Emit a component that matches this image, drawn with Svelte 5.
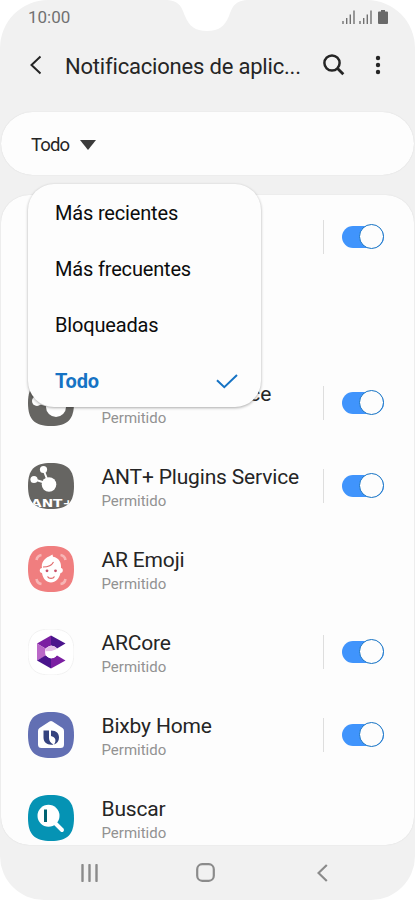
<script lang="ts">
	type App = {
		icon: string;
		name: string;
		toggle: boolean;
	};

	const options = ['Más recientes', 'Más frecuentes', 'Bloqueadas', 'Todo'];
	let selected = $state('Todo');
	let open = $state(true);

	// the first two rows sit under the open menu
	const apps: App[] = [
		{ icon: '', name: '', toggle: true },
		{ icon: '', name: '', toggle: false },
		{ icon: 'antradio', name: 'ANT Radio Service', toggle: true },
		{ icon: 'ant', name: 'ANT+ Plugins Service', toggle: true },
		{ icon: 'emoji', name: 'AR Emoji', toggle: false },
		{ icon: 'arcore', name: 'ARCore', toggle: true },
		{ icon: 'bixby', name: 'Bixby Home', toggle: true },
		{ icon: 'search', name: 'Buscar', toggle: false }
	];

	const fills: Record<string, string> = {
		antradio: '#666562',
		ant: '#666562',
		emoji: '#f07e7f',
		arcore: '#ffffff',
		bixby: '#626fb3',
		search: '#0593b4'
	};

	const squircle = 'M23 0C39.500 0 46 6.500 46 23S39.500 46 23 46 0 39.500 0 23 6.500 0 23 0Z';

	function choose(option: string) {
		selected = option;
		open = false;
	}
</script>

{#snippet signal()}
	<svg width="13" height="14" viewBox="0 0 13 14">
		<path d="M1 11v3M4.700 8v6M8.300 4.500V14M12 .5V14" stroke="#717171" stroke-width="1.400" />
	</svg>
{/snippet}

<div class="phone">
	<svg class="notch" width="80" height="32" viewBox="0 0 80 32">
		<path d="M0 0C14 1 15 9 18 16C22 26 28 31 40 31S58 26 62 16C65 9 66 1 80 0Z" fill="#fff" />
	</svg>

	<div class="status">
		<span class="time">10:00</span>
		{@render signal()}
		{@render signal()}
		<svg class="battery" width="10" height="14" viewBox="0 0 10 14">
			<path d="M3 0h4v1.500h2a1 1 0 0 1 1 1V13a1 1 0 0 1-1 1H1a1 1 0 0 1-1-1V2.500a1 1 0 0 1 1-1h2z" fill="#696969" />
		</svg>
	</div>

	<header>
		<svg class="back" width="12" height="20" viewBox="0 0 12 20">
			<path d="M10.500 1.500L1.500 10l9 8.500" fill="none" stroke="#252525" stroke-width="2" />
		</svg>
		<h1>Notificaciones de aplic...</h1>
		<svg class="find" width="22" height="22" viewBox="0 0 22 22">
			<circle cx="9" cy="9" r="7.600" fill="none" stroke="#252525" stroke-width="2.500" />
			<path d="M14.300 14.300L20.300 20.300" stroke="#252525" stroke-width="2.800" />
		</svg>
		<svg class="more" width="6" height="20" viewBox="0 0 6 20">
			<g fill="#252525">
				<circle cx="3" cy="3" r="2.200" />
				<circle cx="3" cy="10" r="2.200" />
				<circle cx="3" cy="17" r="2.200" />
			</g>
		</svg>
	</header>

	<div class="filter">
		<button class="current" onclick={() => (open = !open)}>
			<span>{selected}</span>
			<svg width="16" height="10" viewBox="0 0 16 10"><path d="M0 0h16L8 10z" fill="#3b3b3b" /></svg>
		</button>
		{#if open}
			<div class="menu">
				{#each options as option}
					<button class:active={option === selected} onclick={() => choose(option)}>
						<span>{option}</span>
						{#if option === selected}
							<svg width="22" height="15" viewBox="0 0 22 15">
								<path d="M1 6.200L8.300 13.200 21 1" fill="none" stroke="#1673c4" stroke-width="2" />
							</svg>
						{/if}
					</button>
				{/each}
			</div>
		{/if}
	</div>

	<ul class="apps">
		{#each apps as app}
			<li>
				<div class="icon">
					{#if app.icon}
						<svg width="46" height="46" viewBox="0 0 46 46">
							<clipPath id="clip-{app.icon}"><path d={squircle} /></clipPath>
							<path d={squircle} fill={fills[app.icon]} stroke={app.icon === 'arcore' ? '#f2f2f2' : 'none'} />
							{#if app.icon === 'antradio'}
								<path d="M8 22L27 28" stroke="#fff" stroke-width="2" />
								<circle cx="9" cy="21" r="5" fill="#fff" />
								<circle cx="28" cy="27" r="10" fill="#fff" />
							{:else if app.icon === 'ant'}
								<path d="M15.500 7L21 21 6.500 16.500" fill="none" stroke="#fff" stroke-width="2" />
								<circle cx="15.500" cy="6.500" r="3.600" fill="#fff" />
								<circle cx="6" cy="16.500" r="3.600" fill="#fff" />
								<circle cx="21" cy="21.500" r="7.300" fill="#fff" />
								<g clip-path="url(#clip-ant)">
									<text x="3" y="43.500" textLength="43" lengthAdjust="spacingAndGlyphs" class="ant">ANT+</text>
								</g>
							{:else if app.icon === 'emoji'}
								<path d="M8.500 14a6 6 0 0 1 5-5M32.500 9a6 6 0 0 1 5 5M8.500 33a6 6 0 0 0 5 5M32.500 38a6 6 0 0 0 5-5" fill="none" stroke="#f7b5b5" stroke-width="2.600" />
								<path d="M14 22c-1-5 2-9.500 7-11.500l3.500-2 .5 2.300c6 1.200 8.500 5.500 8 11.200 2.500 0 2.500 5-.5 5-1.500 6-5 9.500-9.500 9.500s-8-3.500-9-9.500c-3 0-3-5 0-5Z" fill="#fff" />
								<path d="M15 21c5 0 9-2 10.500-5" fill="none" stroke="#e06b6d" stroke-width="1.100" />
								<circle cx="19" cy="24.800" r="1.400" fill="#c8506a" />
								<circle cx="27.500" cy="24.800" r="1.400" fill="#c8506a" />
								<path d="M19.500 30.500c1.500 2.500 5.500 2.500 7 0" fill="none" stroke="#e06b6d" stroke-width="1.300" />
							{:else if app.icon === 'arcore'}
								<path d="M23 6.500L9 14.500 17.500 19.500 23 16.500Z" fill="#7b1fa2" />
								<path d="M23 6.500L37.500 14.500 29 19.500 23 16.500Z" fill="#4a148c" />
								<path d="M9 14.500L17.500 19.500V27L9 31.500Z" fill="#ba68c8" />
								<path d="M9 31.500L17.500 26.500 23 29.500V39.500Z" fill="#4a148c" />
								<path d="M23 39.500L37.500 31.500 29 26.500 23 29.500Z" fill="#7b1fa2" />
								<circle cx="23.500" cy="23" r="6.300" fill="#fff" />
								<path d="M23.500 16.700a6.300 6.300 0 0 0-6.300 5.500l6.300-.2 5.500-2A6.300 6.300 0 0 0 23.500 16.700Z" fill="#e3bfe8" />
							{:else if app.icon === 'bixby'}
								<path d="M21.500 9.600q1.500-1 3 0L34.500 16q1.500 1 1.500 3v13.500q0 3.500-3.500 3.500h-19Q10 36 10 32.500V19q0-2 1.500-3Z" fill="#fff" />
								<path d="M15.500 18.500h5.500v7.500q0 4 4.500 6.500c-6 1-10-2-10-7Z" fill="#35437f" />
								<path d="M23 18.500c5.500 0 8 3 8 7 0 3.500-2 6-5 7 2-2.500 2-6-.5-7.500l-2.500-1Z" fill="#35437f" />
							{:else if app.icon === 'search'}
								<path d="M27 28L34 35" stroke="#fff" stroke-width="4" stroke-linecap="round" />
								<circle cx="20.500" cy="20.800" r="11" fill="#fff" />
								<path d="M17.500 14.500v12.500" stroke="#006372" stroke-width="3" />
							{/if}
						</svg>
					{/if}
				</div>
				<div class="label">
					{#if app.name}
						<span class="name">{app.name}</span>
						<span class="state">Permitido</span>
					{/if}
				</div>
				{#if app.toggle}
					<div class="divider"></div>
					<div class="switch"><div class="knob"></div></div>
				{/if}
			</li>
		{/each}
	</ul>

	<nav>
		<svg width="18" height="18" viewBox="0 0 18 18">
			<path d="M1.500 1v16M8.500 1v16M15.500 1v16" stroke="#8b8b8b" stroke-width="2.400" stroke-linecap="round" />
		</svg>
		<svg class="home" width="19" height="19" viewBox="0 0 19 19">
			<rect x="1.200" y="1.200" width="16.600" height="16.600" rx="5" fill="none" stroke="#8b8b8b" stroke-width="2.200" />
		</svg>
		<svg width="11" height="18" viewBox="0 0 11 18">
			<path d="M9.800 1L1.500 9l8.300 8" fill="none" stroke="#8b8b8b" stroke-width="2.200" />
		</svg>
	</nav>
</div>

<style>
	:global(body) {
		background: #fff;
	}
	.phone {
		position: relative;
		display: flex;
		flex-direction: column;
		width: 415px;
		height: 900px;
		box-sizing: border-box;
		background: #f1f1f1;
		border-radius: 48px 48px 44px 44px;
		overflow: hidden;
		font-family: Roboto, sans-serif;
		color: #252525;
	}
	svg {
		display: block;
		flex: none;
	}
	button {
		border: 0;
		padding: 0;
		background: none;
		font: inherit;
		color: inherit;
		text-align: left;
	}
	.notch {
		position: absolute;
		left: 167px;
		top: 0;
	}
	.status {
		display: flex;
		align-items: center;
		gap: 4px;
		height: 34px;
		padding: 0 27px 0 28px;
		box-sizing: border-box;
	}
	.time {
		flex: 1;
		font-size: 17px;
		color: #717171;
	}
	.battery {
		margin-left: 2px;
	}
	header {
		display: flex;
		align-items: center;
		height: 62px;
		padding-left: 30px;
	}
	h1 {
		width: 240px;
		margin: 3px 18px 0 23px;
		font-size: 22px;
		font-weight: 400;
		letter-spacing: -0.19px;
		white-space: nowrap;
	}
	.more {
		margin-left: 30px;
	}
	.filter {
		position: relative;
		height: 63px;
		margin: 16px 1px 0;
		flex: none;
		background: #fdfdfd;
		border-radius: 32px;
		box-shadow: 0 0 1px #ccc;
	}
	.current {
		display: flex;
		align-items: center;
		gap: 11px;
		height: 65px;
		padding-left: 30px;
		font-size: 18.5px;
		letter-spacing: -0.9px;
	}
	.menu {
		position: absolute;
		z-index: 1;
		left: 27px;
		top: 72px;
		width: 233px;
		height: 223px;
		background: #fdfdfd;
		border-radius: 26px;
		box-shadow: 0 1px 3px rgba(0, 0, 0, 0.33);
	}
	.menu button {
		display: flex;
		align-items: center;
		justify-content: space-between;
		width: 100%;
		height: 56px;
		padding: 2px 23px 0 27px;
		font-size: 20px;
		letter-spacing: -0.17px;
		color: #0c0c0c;
	}
	.menu .active {
		font-weight: 700;
		color: #1673c4;
	}
	.apps {
		height: 650px;
		flex: none;
		margin: 20px 1px 0;
		padding: 0;
		list-style: none;
		background: #fdfdfd;
		border-radius: 28px;
		box-shadow: 0 0 1px #ccc;
		overflow: hidden;
	}
	li {
		display: flex;
		align-items: center;
		height: 83px;
		padding: 0 30px 0 27px;
	}
	.icon {
		width: 46px;
		height: 46px;
	}
	.ant {
		font: 700 10.5px 'DejaVu Sans', sans-serif;
		fill: #fff;
	}
	.label {
		display: flex;
		flex: 1;
		flex-direction: column;
		padding: 6px 0 0 27.5px;
		white-space: nowrap;
	}
	.name {
		font-size: 21px;
		line-height: 25px;
		letter-spacing: -0.17px;
	}
	.state {
		font-size: 15px;
		line-height: 22px;
		color: #929292;
	}
	.divider {
		width: 1px;
		height: 34px;
		margin-right: 18px;
		background: #dedede;
	}
	.switch {
		display: flex;
		align-items: center;
		justify-content: flex-end;
		width: 42px;
		height: 22px;
		border-radius: 11px;
		background: #4094fc;
	}
	.knob {
		width: 23px;
		height: 23px;
		flex: none;
		border: 1px solid #1673c4;
		border-radius: 50%;
		background: #fdfdfd;
	}
	nav {
		display: flex;
		align-items: center;
		justify-content: space-between;
		height: 55px;
		padding: 0 87px 0 81px;
	}
	.home {
		margin-right: 5px;
	}
</style>
